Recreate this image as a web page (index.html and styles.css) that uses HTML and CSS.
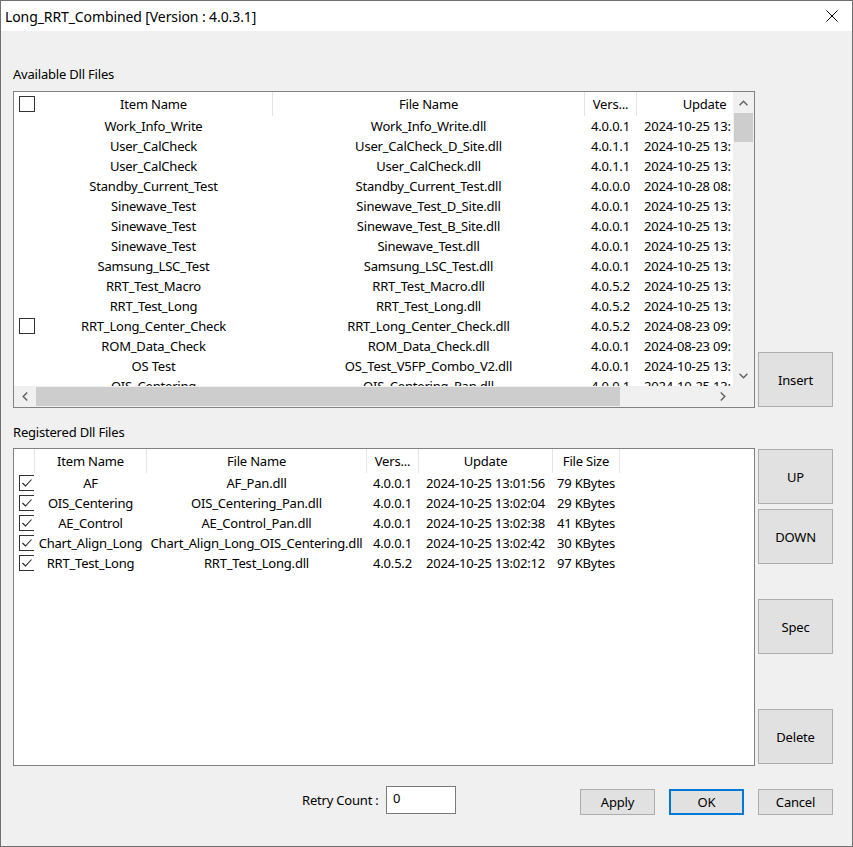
FILE: index.html
```html
<!DOCTYPE html>
<html>
<head>
<meta charset="utf-8">
<title>Long_RRT_Combined</title>
<link rel="stylesheet" href="styles.css">
</head>
<body>
<div class="window">
  <div class="titlebar">
    <span class="title">Long_RRT_Combined [Version : 4.0.3.1]</span>
    <span class="close"><svg width="12" height="12" viewBox="0 0 12 12"><path d="M0.5 0.5 L11.5 11.5 M11.5 0.5 L0.5 11.5" stroke="#000" stroke-width="1" fill="none"/></svg></span>
  </div>
  <div class="content">
    <div class="group-label label-available">Available Dll Files</div>
    <div class="section section-top">
      <div class="listbox list-top">
        <div class="list-main">
          <div class="viewport">
            <div class="hrow">
              <div class="cell tc1"><span class="cb-slot"><span class="cb"></span></span><span class="txt">Item Name</span></div>
              <div class="cell tc2">File Name</div>
              <div class="cell tc3">Vers...</div>
              <div class="cell tc4">Update</div>
            </div>
            <div class="row"><div class="cell tc1"><span class="cb-slot"></span><span class="txt">Work_Info_Write</span></div><div class="cell tc2">Work_Info_Write.dll</div><div class="cell tc3">4.0.0.1</div><div class="cell tc4 upd">2024-10-25 13:</div></div>
            <div class="row"><div class="cell tc1"><span class="cb-slot"></span><span class="txt">User_CalCheck</span></div><div class="cell tc2">User_CalCheck_D_Site.dll</div><div class="cell tc3">4.0.1.1</div><div class="cell tc4 upd">2024-10-25 13:</div></div>
            <div class="row"><div class="cell tc1"><span class="cb-slot"></span><span class="txt">User_CalCheck</span></div><div class="cell tc2">User_CalCheck.dll</div><div class="cell tc3">4.0.1.1</div><div class="cell tc4 upd">2024-10-25 13:</div></div>
            <div class="row"><div class="cell tc1"><span class="cb-slot"></span><span class="txt">Standby_Current_Test</span></div><div class="cell tc2">Standby_Current_Test.dll</div><div class="cell tc3">4.0.0.0</div><div class="cell tc4 upd">2024-10-28 08:</div></div>
            <div class="row"><div class="cell tc1"><span class="cb-slot"></span><span class="txt">Sinewave_Test</span></div><div class="cell tc2">Sinewave_Test_D_Site.dll</div><div class="cell tc3">4.0.0.1</div><div class="cell tc4 upd">2024-10-25 13:</div></div>
            <div class="row"><div class="cell tc1"><span class="cb-slot"></span><span class="txt">Sinewave_Test</span></div><div class="cell tc2">Sinewave_Test_B_Site.dll</div><div class="cell tc3">4.0.0.1</div><div class="cell tc4 upd">2024-10-25 13:</div></div>
            <div class="row"><div class="cell tc1"><span class="cb-slot"></span><span class="txt">Sinewave_Test</span></div><div class="cell tc2">Sinewave_Test.dll</div><div class="cell tc3">4.0.0.1</div><div class="cell tc4 upd">2024-10-25 13:</div></div>
            <div class="row"><div class="cell tc1"><span class="cb-slot"></span><span class="txt">Samsung_LSC_Test</span></div><div class="cell tc2">Samsung_LSC_Test.dll</div><div class="cell tc3">4.0.0.1</div><div class="cell tc4 upd">2024-10-25 13:</div></div>
            <div class="row"><div class="cell tc1"><span class="cb-slot"></span><span class="txt">RRT_Test_Macro</span></div><div class="cell tc2">RRT_Test_Macro.dll</div><div class="cell tc3">4.0.5.2</div><div class="cell tc4 upd">2024-10-25 13:</div></div>
            <div class="row"><div class="cell tc1"><span class="cb-slot"></span><span class="txt">RRT_Test_Long</span></div><div class="cell tc2">RRT_Test_Long.dll</div><div class="cell tc3">4.0.5.2</div><div class="cell tc4 upd">2024-10-25 13:</div></div>
            <div class="row"><div class="cell tc1"><span class="cb-slot"><span class="cb"></span></span><span class="txt">RRT_Long_Center_Check</span></div><div class="cell tc2">RRT_Long_Center_Check.dll</div><div class="cell tc3">4.0.5.2</div><div class="cell tc4 upd">2024-08-23 09:</div></div>
            <div class="row"><div class="cell tc1"><span class="cb-slot"></span><span class="txt">ROM_Data_Check</span></div><div class="cell tc2">ROM_Data_Check.dll</div><div class="cell tc3">4.0.0.1</div><div class="cell tc4 upd">2024-08-23 09:</div></div>
            <div class="row"><div class="cell tc1"><span class="cb-slot"></span><span class="txt">OS Test</span></div><div class="cell tc2">OS_Test_V5FP_Combo_V2.dll</div><div class="cell tc3">4.0.0.1</div><div class="cell tc4 upd">2024-10-25 13:</div></div>
            <div class="row"><div class="cell tc1"><span class="cb-slot"></span><span class="txt">OIS_Centering</span></div><div class="cell tc2">OIS_Centering_Pan.dll</div><div class="cell tc3">4.0.0.1</div><div class="cell tc4 upd">2024-10-25 13:</div></div>
          </div>
          <div class="vscroll">
            <div class="sbtn"><svg width="9" height="6" viewBox="0 0 9 6"><polyline points="0.6,5.2 4.5,1.2 8.4,5.2" fill="none" stroke="#606060" stroke-width="1.4"/></svg></div>
            <div class="vtrack"><div class="vthumb"></div></div>
            <div class="sbtn"><svg width="9" height="6" viewBox="0 0 9 6"><polyline points="0.6,0.8 4.5,4.8 8.4,0.8" fill="none" stroke="#606060" stroke-width="1.4"/></svg></div>
          </div>
        </div>
        <div class="hbar">
          <div class="hscroll">
            <div class="sbtn"><svg width="6" height="9" viewBox="0 0 6 9"><polyline points="5.2,0.6 1.2,4.5 5.2,8.4" fill="none" stroke="#606060" stroke-width="1.4"/></svg></div>
            <div class="htrack"><div class="hthumb"></div></div>
            <div class="sbtn"><svg width="6" height="9" viewBox="0 0 6 9"><polyline points="0.8,0.6 4.8,4.5 0.8,8.4" fill="none" stroke="#606060" stroke-width="1.4"/></svg></div>
          </div>
          <div class="corner"></div>
        </div>
      </div>
      <div class="side side-top">
        <button class="btn btn-big">Insert</button>
      </div>
    </div>

    <div class="group-label label-registered">Registered Dll Files</div>
    <div class="section section-bottom">
      <div class="listbox list-bottom">
        <div class="hrow">
          <div class="cell bc0"></div>
          <div class="cell bc1">Item Name</div>
          <div class="cell bc2">File Name</div>
          <div class="cell bc3">Vers...</div>
          <div class="cell bc4">Update</div>
          <div class="cell bc5">File Size</div>
        </div>
        <div class="row"><div class="cell bc0"><span class="cb"><svg width="14" height="14" viewBox="0 0 14 14"><polyline points="2.5,7 5.5,10 11.5,3.5" fill="none" stroke="#222" stroke-width="1.1"/></svg></span></div><div class="cell bc1">AF</div><div class="cell bc2">AF_Pan.dll</div><div class="cell bc3">4.0.0.1</div><div class="cell bc4">2024-10-25 13:01:56</div><div class="cell bc5">79 KBytes</div></div>
        <div class="row"><div class="cell bc0"><span class="cb"><svg width="14" height="14" viewBox="0 0 14 14"><polyline points="2.5,7 5.5,10 11.5,3.5" fill="none" stroke="#222" stroke-width="1.1"/></svg></span></div><div class="cell bc1">OIS_Centering</div><div class="cell bc2">OIS_Centering_Pan.dll</div><div class="cell bc3">4.0.0.1</div><div class="cell bc4">2024-10-25 13:02:04</div><div class="cell bc5">29 KBytes</div></div>
        <div class="row"><div class="cell bc0"><span class="cb"><svg width="14" height="14" viewBox="0 0 14 14"><polyline points="2.5,7 5.5,10 11.5,3.5" fill="none" stroke="#222" stroke-width="1.1"/></svg></span></div><div class="cell bc1">AE_Control</div><div class="cell bc2">AE_Control_Pan.dll</div><div class="cell bc3">4.0.0.1</div><div class="cell bc4">2024-10-25 13:02:38</div><div class="cell bc5">41 KBytes</div></div>
        <div class="row"><div class="cell bc0"><span class="cb"><svg width="14" height="14" viewBox="0 0 14 14"><polyline points="2.5,7 5.5,10 11.5,3.5" fill="none" stroke="#222" stroke-width="1.1"/></svg></span></div><div class="cell bc1">Chart_Align_Long</div><div class="cell bc2">Chart_Align_Long_OIS_Centering.dll</div><div class="cell bc3">4.0.0.1</div><div class="cell bc4">2024-10-25 13:02:42</div><div class="cell bc5">30 KBytes</div></div>
        <div class="row"><div class="cell bc0"><span class="cb"><svg width="14" height="14" viewBox="0 0 14 14"><polyline points="2.5,7 5.5,10 11.5,3.5" fill="none" stroke="#222" stroke-width="1.1"/></svg></span></div><div class="cell bc1">RRT_Test_Long</div><div class="cell bc2">RRT_Test_Long.dll</div><div class="cell bc3">4.0.5.2</div><div class="cell bc4">2024-10-25 13:02:12</div><div class="cell bc5">97 KBytes</div></div>
      </div>
      <div class="side side-bottom">
        <button class="btn btn-big">UP</button>
        <button class="btn btn-big btn-down">DOWN</button>
        <button class="btn btn-big btn-spec">Spec</button>
        <button class="btn btn-big btn-delete">Delete</button>
      </div>
    </div>

    <div class="footer">
      <span class="retry-label">Retry Count :</span>
      <span class="retry-input">0</span>
      <button class="btn btn-small btn-apply">Apply</button>
      <button class="btn btn-small btn-ok">OK</button>
      <button class="btn btn-small">Cancel</button>
    </div>
  </div>
</div>
</body>
</html>
```

FILE: styles.css
```css
* { box-sizing: border-box; }
html, body { margin: 0; padding: 0; }
body {
  width: 853px;
  height: 847px;
  background: #f0f0f0;
  font-family: "Noto Sans", "Open Sans", sans-serif;
  font-size: 13px;
  letter-spacing: -0.2px;
  color: #000;
}
.window {
  width: 853px;
  height: 847px;
  border: 1px solid #707070;
  background: #f0f0f0;
  display: flex;
  flex-direction: column;
}
.titlebar {
  flex: none;
  height: 30px;
  background: #fff;
  display: flex;
  align-items: center;
  padding-left: 4px;
}
.title { font-size: 14px; letter-spacing: -0.1px; white-space: nowrap; }
.close { margin-left: auto; margin-right: 14px; width: 12px; height: 12px; display: flex; }

.content { padding: 0 12px; display: flex; flex-direction: column; }
.group-label { height: 16px; line-height: 16px; white-space: nowrap; }
.label-available { margin-top: 35px; }
.label-registered { margin-top: 16px; }
.section { display: flex; }
.section-top { margin-top: 9px; }
.section-bottom { margin-top: 8px; }

.listbox { width: 742px; border: 1px solid #828282; background: #fff; overflow: hidden; flex: none; }
.list-top { height: 317px; display: flex; flex-direction: column; }
.list-bottom { height: 318px; }
.list-main { display: flex; height: 294px; }
.viewport { flex: 1; overflow: hidden; }

.hrow, .row { display: flex; white-space: nowrap; }
.hrow { height: 24px; }
.row { height: 20px; }
.cell { flex: none; text-align: center; overflow: hidden; line-height: 20px; }
.hrow .cell { line-height: 24px; border-right: 1px solid #e5e5e5; height: 24px; }
.row .cell { border-right: 1px solid transparent; }

.tc1 { width: 259px; display: flex; }
.tc2 { width: 312px; }
.tc3 { width: 52px; }
.tc4 { width: 136px; }
.row .upd { width: 97px; text-align: left; padding-left: 7px; border-right: 0; }
.cb-slot { width: 21px; flex: none; display: flex; align-items: center; padding-left: 5px; }
.txt { flex: 1; text-align: center; }

.bc0 { width: 21px; display: flex; align-items: center; padding-left: 5px; }
.bc1 { width: 112px; }
.bc2 { width: 220px; }
.bc3 { width: 52px; }
.bc4 { width: 134px; }
.bc5 { width: 67px; }

.cb {
  width: 16px;
  height: 16px;
  border: 1px solid #333;
  background: #fff;
  display: flex;
  align-items: center;
  justify-content: center;
  flex: none;
}

.vscroll { width: 21px; flex: none; background: #f0f0f0; display: flex; flex-direction: column; }
.sbtn { width: 21px; height: 21px; flex: none; display: flex; align-items: center; justify-content: center; background: #f0f0f0; }
.vtrack { flex: 1; padding: 0 1px; }
.vthumb { height: 29px; background: #cdcdcd; }

.hbar { display: flex; height: 21px; }
.hscroll { flex: 1; display: flex; background: #f0f0f0; }
.htrack { flex: 1; padding: 1px 0 1px 1px; }
.hthumb { width: 584px; height: 100%; background: #cdcdcd; }
.corner { width: 21px; flex: none; background: #f0f0f0; }

.btn {
  font-family: inherit;
  font-size: 13px;
  letter-spacing: -0.2px;
  color: #000;
  background: #e1e1e1;
  border: 1px solid #adadad;
  padding: 0;
  margin: 0;
  flex: none;
}
.btn-big { width: 75px; height: 55px; }
.side { display: flex; flex-direction: column; margin-left: 3px; }
.side-top { justify-content: flex-end; padding-bottom: 1px; }
.side-bottom { padding-top: 1px; }
.btn-down { margin-top: 5px; }
.btn-spec { margin-top: 35px; }
.btn-delete { margin-top: 55px; }

.footer { display: flex; align-items: flex-start; margin-top: 20px; padding-left: 289px; }
.retry-label { width: 84px; margin-top: 6px; height: 16px; line-height: 16px; white-space: nowrap; }
.retry-input {
  width: 70px;
  height: 28px;
  background: #fff;
  border: 1px solid #7a7a7a;
  padding: 2px 0 0 6px;
  line-height: 18px;
  flex: none;
}
.btn-small { width: 75px; height: 26px; margin-top: 3px; margin-left: 14px; }
.btn-apply { margin-left: 124px; }
.btn-ok { border: 2px solid #0078d7; }
```
